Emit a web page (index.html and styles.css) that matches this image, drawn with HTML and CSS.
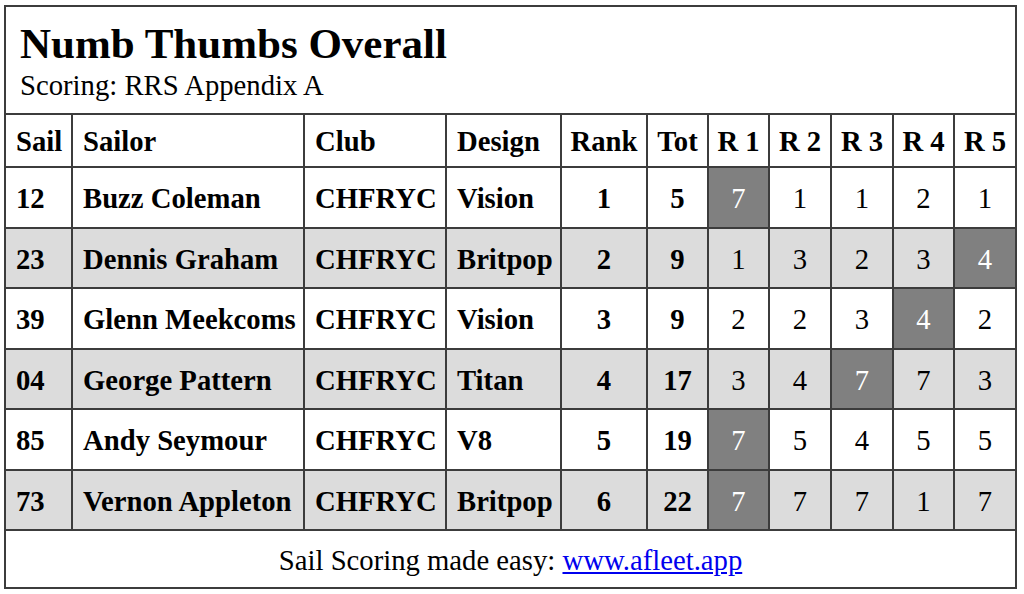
FILE: index.html
```html
<!DOCTYPE html>
<html>
<head>
<meta charset="utf-8">
<title>Numb Thumbs Overall</title>
<link rel="stylesheet" href="styles.css">
</head>
<body>
<div class="page">
<table class="results">
  <colgroup>
    <col class="c-sail"><col class="c-sailor"><col class="c-club"><col class="c-design">
    <col class="c-rank"><col class="c-tot">
    <col class="c-r1"><col class="c-r2"><col class="c-r2"><col class="c-r1"><col class="c-r2">
  </colgroup>
  <thead>
    <tr class="title-row">
      <th colspan="11" class="title-cell">
        <div class="title">Numb Thumbs Overall</div>
        <div class="subtitle">Scoring: RRS Appendix A</div>
      </th>
    </tr>
    <tr class="head-row">
      <th class="l">Sail</th><th class="l">Sailor</th><th class="l">Club</th><th class="l">Design</th>
      <th>Rank</th><th>Tot</th><th>R 1</th><th>R 2</th><th>R 3</th><th>R 4</th><th>R 5</th>
    </tr>
  </thead>
  <tbody>
    <tr>
      <td class="b l">12</td><td class="b l">Buzz Coleman</td><td class="b l">CHFRYC</td><td class="b l">Vision</td>
      <td class="b">1</td><td class="b">5</td><td class="disc">7</td><td>1</td><td>1</td><td>2</td><td>1</td>
    </tr>
    <tr class="alt">
      <td class="b l">23</td><td class="b l">Dennis Graham</td><td class="b l">CHFRYC</td><td class="b l">Britpop</td>
      <td class="b">2</td><td class="b">9</td><td>1</td><td>3</td><td>2</td><td>3</td><td class="disc">4</td>
    </tr>
    <tr>
      <td class="b l">39</td><td class="b l">Glenn Meekcoms</td><td class="b l">CHFRYC</td><td class="b l">Vision</td>
      <td class="b">3</td><td class="b">9</td><td>2</td><td>2</td><td>3</td><td class="disc">4</td><td>2</td>
    </tr>
    <tr class="alt">
      <td class="b l">04</td><td class="b l">George Pattern</td><td class="b l">CHFRYC</td><td class="b l">Titan</td>
      <td class="b">4</td><td class="b">17</td><td>3</td><td>4</td><td class="disc">7</td><td>7</td><td>3</td>
    </tr>
    <tr>
      <td class="b l">85</td><td class="b l">Andy Seymour</td><td class="b l">CHFRYC</td><td class="b l">V8</td>
      <td class="b">5</td><td class="b">19</td><td class="disc">7</td><td>5</td><td>4</td><td>5</td><td>5</td>
    </tr>
    <tr class="alt">
      <td class="b l">73</td><td class="b l">Vernon Appleton</td><td class="b l">CHFRYC</td><td class="b l">Britpop</td>
      <td class="b">6</td><td class="b">22</td><td class="disc">7</td><td>7</td><td>7</td><td>1</td><td>7</td>
    </tr>
  </tbody>
  <tfoot>
    <tr class="foot-row">
      <td colspan="11" class="foot-cell">Sail Scoring made easy: <a href="#">www.afleet.app</a></td>
    </tr>
  </tfoot>
</table>
</div>
</body>
</html>
```

FILE: styles.css
```css
html, body {
  margin: 0;
  padding: 0;
  background: #ffffff;
}

.page {
  padding: 5px 0 0 4px;
}

.results {
  border-collapse: collapse;
  table-layout: fixed;
  width: 1011px;
  font-family: "Liberation Serif", "Times New Roman", serif;
  font-size: 28.7px;
  color: #000;
}

.results th,
.results td {
  border: 2px solid #3c3c3c;
  padding: 0 10px;
  text-align: center;
  vertical-align: middle;
  white-space: nowrap;
  overflow: hidden;
}

.c-sail { width: 67px; }
.c-sailor { width: 232px; }
.c-club { width: 142px; }
.c-design { width: 115px; }
.c-rank { width: 86px; }
.c-tot { width: 61px; }
.c-r1 { width: 61px; }
.c-r2 { width: 62px; }

.results .l { text-align: left; }

.results .title-cell {
  text-align: left;
  font-weight: normal;
  padding: 14px 14px 12px;
}

.title {
  font-size: 43px;
  font-weight: bold;
  line-height: 46px;
}

.subtitle {
  font-size: 28.7px;
  line-height: 32px;
  margin-top: 2px;
}

.head-row th {
  font-weight: bold;
  height: 49px;
  padding-top: 2px;
  padding-left: 6px;
  padding-right: 6px;
}

.head-row th.l { padding-left: 10px; }

.results tbody td {
  height: 55.5px;
  padding-top: 3px;
}

.results td.b { font-weight: bold; }

.results tr.alt td { background: #dcdcdc; }

.results td.disc,
.results tr.alt td.disc {
  background: #808080;
  color: #ffffff;
}

.results .foot-cell {
  height: 54px;
  padding-top: 2px;
  text-align: center;
}

.foot-cell a {
  color: #0000ee;
  text-decoration: underline;
}
```
